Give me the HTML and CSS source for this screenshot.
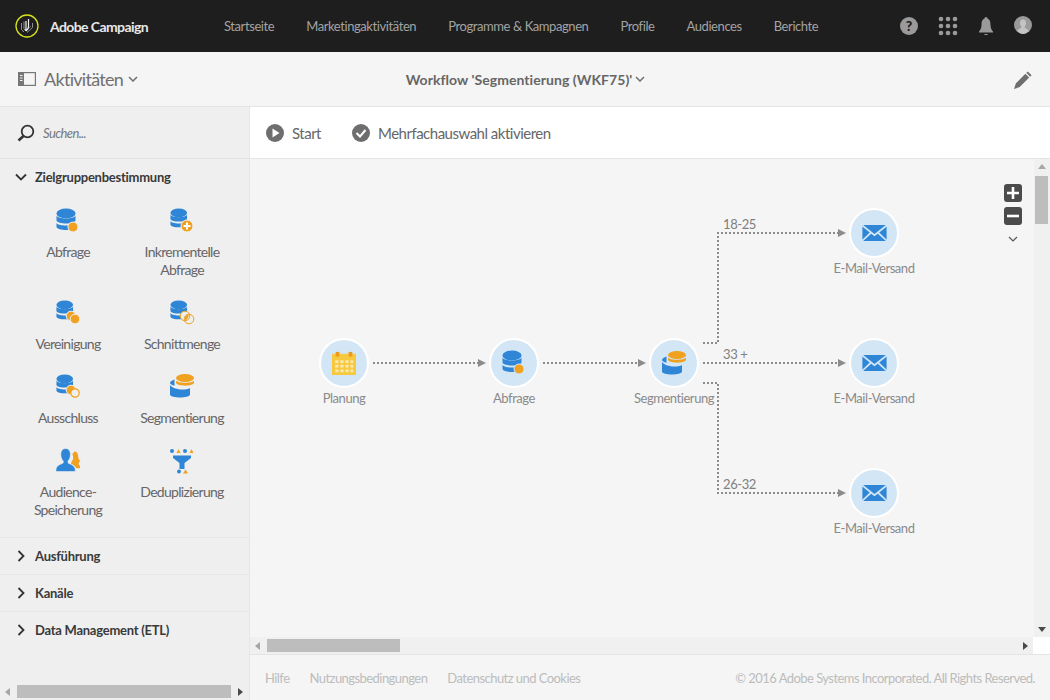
FILE: index.html
```html
<!DOCTYPE html>
<html lang="de">
<head>
  <meta charset="UTF-8">
  <meta name="viewport" content="width=device-width, initial-scale=1.0">
  <title>Adobe Campaign</title>
  <link rel="stylesheet" href="styles.css">
</head>
<body>
  <!-- shared icons -->
  <svg class="icon-defs" width="0" height="0" aria-hidden="true">
    <defs>
      <symbol id="db" viewBox="0 0 24 24">
        <ellipse cx="10" cy="5.500" rx="9.500" ry="5" fill="#2f86d6"/>
        <path d="M.5 7.500C1.500 11.500 18.500 11.500 19.500 7.500V12.500C18.500 16.500 1.500 16.500 .5 12.500Z" fill="#2f86d6"/>
        <path d="M.5 14.800C1.500 18.500 18.500 18.500 19.500 14.800V19C18.500 23 1.500 23 .5 19Z" fill="#2f86d6"/>
      </symbol>
      <symbol id="mail" viewBox="0 0 26 18">
        <path d="M1 0H25L13 9.500Z" fill="#2f86d6"/>
        <path d="M0 1.500L8 8 0 15.500ZM26 1.500L18 8 26 15.500ZM9.500 9.200L13 12 16.500 9.200 25 17H1Z" fill="#2f86d6"/>
      </symbol>
      <symbol id="segment" viewBox="0 0 24 24">
        <path d="M4.500 5.500C2 6.300 0 7.500 0 9C0 10 2 11 4.500 11.800Z" fill="#2f86d6"/>
        <path d="M0 11C2 14 8 15.500 12 15.500C16 15.500 20 15 20 13.500V20.500C20 24.500 0 24.500 0 20.500Z" fill="#2f86d6"/>
        <ellipse cx="15" cy="4" rx="9" ry="4" fill="#f0a11f"/>
        <path d="M6 6.500C7.500 9.500 22.500 9.500 24 6.500V9C22.500 12.500 7.500 12.500 6 9Z" fill="#f0a11f"/>
      </symbol>
    </defs>
  </svg>

  <header class="topbar">
    <div class="brand">
      <svg class="brand-logo" viewBox="0 0 24 24" width="24" height="24">
        <circle cx="12" cy="12" r="11" fill="none" stroke="#d6e21b" stroke-width="1.300"/>
        <path d="M6.500 9V15.500L9 18M9 7.500V15L11 17" fill="none" stroke="#8f8f8f" stroke-width="1"/>
        <path d="M17.500 9V13.500L12 18.500M15.500 12.500L11.500 16" fill="none" stroke="#8f8f8f" stroke-width="1"/>
        <path d="M11 7V15C11 16 10 16.500 10 16.500M13.500 5V12.500C13.500 15 12 16 11 17" fill="none" stroke="#f2f2f2" stroke-width="1.200"/>
      </svg>
      <span>Adobe Campaign</span>
    </div>
    <nav class="topnav">
      <a>Startseite</a>
      <a>Marketingaktivitäten</a>
      <a>Programme &amp; Kampagnen</a>
      <a>Profile</a>
      <a>Audiences</a>
      <a>Berichte</a>
    </nav>
    <div class="topicons">
      <span class="help-icon">?</span>
      <svg viewBox="0 0 20 20" width="20" height="20" fill="#9a9a9a">
        <circle cx="3" cy="3" r="2.300"/><circle cx="10" cy="3" r="2.300"/><circle cx="17" cy="3" r="2.300"/>
        <circle cx="3" cy="10" r="2.300"/><circle cx="10" cy="10" r="2.300"/><circle cx="17" cy="10" r="2.300"/>
        <circle cx="3" cy="17" r="2.300"/><circle cx="10" cy="17" r="2.300"/><circle cx="17" cy="17" r="2.300"/>
      </svg>
      <svg viewBox="0 0 16 20" width="16" height="20" fill="#9a9a9a">
        <path d="M8 1C9 1 9.500 1.800 9.500 2.500C12 3.300 12.500 6 12.500 9C12.500 12 13.500 14 15 15.500V16.500H1V15.500C2.500 14 3.500 12 3.500 9C3.500 6 4 3.300 6.500 2.500C6.500 1.800 7 1 8 1Z"/>
        <path d="M6 18H10C9.500 19.300 6.500 19.300 6 18Z"/>
      </svg>
      <svg class="avatar" viewBox="0 0 18 18" width="18" height="18">
        <circle cx="9" cy="9" r="9" fill="#9a9a9a"/>
        <path d="M9 3.500C11 3.500 12 5 12 7C12 9 11 10.500 10.500 11C10.500 12 13 12.500 14.800 14.500C13.500 16.500 11 18 9 18C7 18 4.500 16.500 3.200 14.500C5 12.500 7.500 12 7.500 11C7 10.500 6 9 6 7C6 5 7 3.500 9 3.500Z" fill="#c4c4c4"/>
      </svg>
    </div>
  </header>

  <div class="subbar">
    <div class="subbar-left">
      <svg viewBox="0 0 18 14" width="18" height="14">
        <rect x=".6" y=".6" width="16.800" height="12.800" fill="none" stroke="#777" stroke-width="1.200"/>
        <rect x=".6" y=".6" width="5.400" height="12.800" fill="#777"/>
        <path d="M2 3.500H4.500M2 6H4.500M2 8.500H4.500" stroke="#f5f5f5" stroke-width="1"/>
      </svg>
      <span class="subbar-title">Aktivitäten</span>
      <svg class="chev" viewBox="0 0 10 6" width="10" height="6"><path d="M1 1L5 5 9 1" fill="none" stroke="#707070" stroke-width="1.500"/></svg>
    </div>
    <div class="workflow-title">
      <span>Workflow 'Segmentierung (WKF75)'</span>
      <svg class="chev" viewBox="0 0 10 6" width="10" height="6"><path d="M1 1L5 5 9 1" fill="none" stroke="#707070" stroke-width="1.500"/></svg>
    </div>
    <div class="subbar-right">
      <svg viewBox="0 0 20 20" width="19" height="19" fill="#6e6e6e">
        <path d="M14.500 1.500L18.500 5.500 17 7 13 3ZM12 4L16 8 6 18 0 20 2 14Z"/>
      </svg>
    </div>
  </div>

  <div class="workspace">
    <aside class="sidebar">
      <div class="search-row">
        <svg viewBox="0 0 18 18" width="18" height="18">
          <circle cx="10.500" cy="7.500" r="5.800" fill="none" stroke="#333" stroke-width="1.800"/>
          <path d="M6.500 12L1.500 16.500" stroke="#333" stroke-width="2.600"/>
        </svg>
        <span>Suchen...</span>
      </div>

      <section class="group">
        <div class="group-head">
          <svg viewBox="0 0 12 8" width="12" height="8"><path d="M1 1.500L6 6.500 11 1.500" fill="none" stroke="#333" stroke-width="1.800"/></svg>
          <span>Zielgruppenbestimmung</span>
        </div>
        <div class="activity-grid">
          <div class="activity">
            <svg class="activity-icon" viewBox="0 0 24 26" width="24" height="26">
              <use href="#db" width="24" height="24"/>
              <circle cx="17" cy="19" r="5" fill="#f0a11f" stroke="#efefef" stroke-width="1"/>
            </svg>
            <span>Abfrage</span>
          </div>
          <div class="activity">
            <svg class="activity-icon" viewBox="0 0 24 26" width="24" height="26">
              <use href="#db" width="21" height="21"/>
              <circle cx="17" cy="18" r="6" fill="#f0a11f" stroke="#efefef" stroke-width="1"/>
              <path d="M17 14.500V21.500M13.500 18H20.500" stroke="#fff" stroke-width="2"/>
            </svg>
            <span>Inkrementelle Abfrage</span>
          </div>
          <div class="activity">
            <svg class="activity-icon" viewBox="0 0 24 26" width="24" height="26">
              <use href="#db" width="21" height="21"/>
              <circle cx="15" cy="16" r="4.800" fill="#f0a11f" stroke="#efefef" stroke-width="1"/>
              <circle cx="19" cy="19" r="4.800" fill="#f0a11f" stroke="#efefef" stroke-width="1"/>
            </svg>
            <span>Vereinigung</span>
          </div>
          <div class="activity">
            <svg class="activity-icon" viewBox="0 0 24 26" width="24" height="26">
              <use href="#db" width="21" height="21"/>
              <circle cx="15" cy="16" r="4.800" fill="#efefef" stroke="#f0a11f" stroke-width="1"/>
              <circle cx="19" cy="19" r="4.800" fill="none" stroke="#f0a11f" stroke-width="1"/>
              <path d="M15.200 20.500C17 20 18.500 18 18.800 14.600C15.500 15 14 17.500 15.200 20.500Z" fill="#f0a11f"/>
            </svg>
            <span>Schnittmenge</span>
          </div>
          <div class="activity">
            <svg class="activity-icon" viewBox="0 0 24 26" width="24" height="26">
              <use href="#db" width="21" height="21"/>
              <circle cx="15" cy="16" r="4.800" fill="#f0a11f" stroke="#efefef" stroke-width="1"/>
              <circle cx="19" cy="19" r="4.200" fill="#efefef" stroke="#f0a11f" stroke-width="1.200"/>
            </svg>
            <span>Ausschluss</span>
          </div>
          <div class="activity">
            <svg class="activity-icon" viewBox="0 0 24 26" width="24" height="26"><use href="#segment" width="24" height="24"/></svg>
            <span>Segmentierung</span>
          </div>
          <div class="activity">
            <svg class="activity-icon" viewBox="0 0 26 26" width="25" height="25">
              <path d="M19 3C21.500 3 23 5 23 7.500C23 10 24 12 25.500 13C24 14 23.500 15 23.500 16.500L25 18V20.500H21C20 17.500 17 16.500 15.500 15.500L16.500 13C18 12 18.500 9 17 6Z" fill="#f0a11f"/>
              <path d="M10 0C13.500 0 15 3 15 6C15 9 14 11.500 12.500 13V15C15 16.500 20 17.500 20 22V24H0V22C0 17.500 5 16.500 7.500 15V13C6 11.500 5 9 5 6C5 3 6.500 0 10 0Z" fill="#2f86d6" stroke="#efefef" stroke-width=".6"/>
            </svg>
            <span>Audience-Speicherung</span>
          </div>
          <div class="activity">
            <svg class="activity-icon" viewBox="0 0 24 26" width="24" height="26">
              <circle cx="2" cy="3" r="2" fill="#2f86d6"/>
              <path d="M6.500 5L8.500 1 10.500 5Z" fill="#f0a11f"/>
              <circle cx="15" cy="3" r="2" fill="#2f86d6"/>
              <path d="M19.500 5L21.500 1 23.500 5Z" fill="#f0a11f"/>
              <path d="M3 7.500H21V10L14.500 15V21H9.500V15L3 10Z" fill="#2f86d6"/>
              <circle cx="9" cy="23.500" r="2" fill="#2f86d6"/>
              <path d="M13 25.500L15.500 21.500 18 25.500Z" fill="#f0a11f"/>
            </svg>
            <span>Deduplizierung</span>
          </div>
        </div>
      </section>

      <div class="group-head closed">
        <svg viewBox="0 0 8 12" width="8" height="12"><path d="M1.500 1L6.500 6 1.500 11" fill="none" stroke="#333" stroke-width="1.800"/></svg>
        <span>Ausführung</span>
      </div>
      <div class="group-head closed">
        <svg viewBox="0 0 8 12" width="8" height="12"><path d="M1.500 1L6.500 6 1.500 11" fill="none" stroke="#333" stroke-width="1.800"/></svg>
        <span>Kanäle</span>
      </div>
      <div class="group-head closed last">
        <svg viewBox="0 0 8 12" width="8" height="12"><path d="M1.500 1L6.500 6 1.500 11" fill="none" stroke="#333" stroke-width="1.800"/></svg>
        <span>Data Management (ETL)</span>
      </div>

      <div class="sidebar-spacer"></div>
      <div class="hscroll sidebar-scroll">
        <span class="arrow arrow-left"></span>
        <span class="hscroll-thumb"></span>
        <span class="arrow arrow-right dark"></span>
      </div>
    </aside>

    <main class="main">
      <div class="toolbar">
        <div class="tool">
          <svg viewBox="0 0 18 18" width="18" height="18">
            <circle cx="9" cy="9" r="9" fill="#6e6e6e"/>
            <path d="M6.500 4.500L13.500 9 6.500 13.500Z" fill="#fff"/>
          </svg>
          <span>Start</span>
        </div>
        <div class="tool">
          <svg viewBox="0 0 18 18" width="18" height="18">
            <circle cx="9" cy="9" r="9" fill="#6e6e6e"/>
            <path d="M4.500 9L8 12.500 13.500 6" fill="none" stroke="#fff" stroke-width="2"/>
          </svg>
          <span>Mehrfachauswahl aktivieren</span>
        </div>
      </div>

      <div class="canvas-wrap">
        <div class="canvas-row">
          <div class="stage">
            <svg class="links" width="784" height="478">
              <g fill="none" stroke="#8c8c8c" stroke-width="2" stroke-dasharray="2 2">
                <path d="M123 204H229"/>
                <path d="M293 204H389"/>
                <path d="M453 184H468V74H589"/>
                <path d="M453 204H589"/>
                <path d="M453 224H468V334H589"/>
              </g>
              <g fill="#8c8c8c">
                <path d="M228 200L236 204 228 208Z"/>
                <path d="M388 200L396 204 388 208Z"/>
                <path d="M588 70L596 74 588 78Z"/>
                <path d="M588 200L596 204 588 208Z"/>
                <path d="M588 330L596 334 588 338Z"/>
              </g>
            </svg>

            <span class="link-label label-a">18-25</span>
            <span class="link-label label-b">33 +</span>
            <span class="link-label label-c">26-32</span>

            <div class="node node-plan">
              <div class="node-circle">
                <svg viewBox="0 0 26 26" width="24" height="24">
                  <rect x="0" y="3" width="26" height="23" fill="#f7c93e"/>
                  <rect x="4" y="1" width="4" height="5" fill="#ee9a1c"/>
                  <rect x="18" y="1" width="4" height="5" fill="#ee9a1c"/>
                  <path d="M3.500 10H7V13H3.500ZM9 10H12.500V13H9ZM14.500 10H18V13H14.500ZM20 10H23V13H20ZM3.500 15H7V18H3.500ZM9 15H12.500V18H9ZM14.500 15H18V18H14.500ZM20 15H23V18H20ZM3.500 20H7V23H3.500ZM9 20H12.500V23H9ZM14.500 20H18V23H14.500ZM20 20H23V23H20Z" fill="#fbe9ae"/>
                </svg>
              </div>
              <span>Planung</span>
            </div>
            <div class="node node-query">
              <div class="node-circle">
                <svg viewBox="0 0 24 26" width="24" height="26">
                  <use href="#db" width="24" height="24"/>
                  <circle cx="17" cy="19" r="5" fill="#f0a11f" stroke="#d3e6f6" stroke-width="1"/>
                </svg>
              </div>
              <span>Abfrage</span>
            </div>
            <div class="node node-seg">
              <div class="node-circle">
                <svg viewBox="0 0 24 24" width="24" height="24"><use href="#segment"/></svg>
              </div>
              <span>Segmentierung</span>
            </div>
            <div class="node node-mail-a">
              <div class="node-circle">
                <svg viewBox="0 0 26 18" width="25" height="17"><use href="#mail"/></svg>
              </div>
              <span>E-Mail-Versand</span>
            </div>
            <div class="node node-mail-b">
              <div class="node-circle">
                <svg viewBox="0 0 26 18" width="25" height="17"><use href="#mail"/></svg>
              </div>
              <span>E-Mail-Versand</span>
            </div>
            <div class="node node-mail-c">
              <div class="node-circle">
                <svg viewBox="0 0 26 18" width="25" height="17"><use href="#mail"/></svg>
              </div>
              <span>E-Mail-Versand</span>
            </div>

            <div class="zoom-tools">
              <span class="zoom-btn">
                <svg viewBox="0 0 18 18" width="18" height="18"><path d="M9 3V15M3 9H15" stroke="#fff" stroke-width="2.600"/></svg>
              </span>
              <span class="zoom-btn">
                <svg viewBox="0 0 18 18" width="18" height="18"><path d="M3 9H15" stroke="#fff" stroke-width="2.600"/></svg>
              </span>
              <svg class="zoom-more" viewBox="0 0 10 6" width="10" height="6"><path d="M1 1L5 5 9 1" fill="none" stroke="#555" stroke-width="1.200"/></svg>
            </div>
          </div>
          <div class="vscroll">
            <span class="arrow arrow-up"></span>
            <span class="vscroll-thumb"></span>
            <span class="vscroll-fill"></span>
            <span class="arrow arrow-down"></span>
          </div>
        </div>
        <div class="hscroll-row">
          <div class="hscroll stage-scroll">
            <span class="arrow arrow-left"></span>
            <span class="hscroll-thumb"></span>
            <span class="arrow arrow-right dark"></span>
          </div>
          <div class="scroll-corner"></div>
        </div>
      </div>

      <footer class="footer">
        <div class="footer-links">
          <a>Hilfe</a>
          <a>Nutzungsbedingungen</a>
          <a>Datenschutz und Cookies</a>
        </div>
        <div>© 2016 Adobe Systems Incorporated. All Rights Reserved.</div>
      </footer>
    </main>
  </div>
</body>
</html>
```

FILE: styles.css
```css
* {
  box-sizing: border-box;
}

html, body {
  height: 100%;
}

body {
  margin: 0;
  width: 1050px;
  height: 700px;
  overflow: hidden;
  display: flex;
  flex-direction: column;
  font-family: Lato, "Open Sans", sans-serif;
  color: #707070;
  background-color: #f5f5f5;
}

.icon-defs {
  position: absolute;
}

/* top bar */
.topbar {
  height: 52px;
  flex: none;
  display: flex;
  align-items: center;
  background-color: #1e1e1e;
}

.brand {
  width: 224px;
  padding-left: 15px;
  display: flex;
  align-items: center;
  gap: 11px;
  font-size: 14px;
  font-weight: 700;
  letter-spacing: -0.6px;
  color: #e8e8e8;
}

.topnav {
  display: flex;
  gap: 32px;
  font-size: 13px;
  letter-spacing: -0.42px;
  color: #a3a3a3;
}

.topicons {
  margin-left: auto;
  width: 150px;
  padding: 0 18px 0 0;
  display: flex;
  align-items: center;
  justify-content: space-between;
}

.avatar {
  margin-top: -2px;
}

.help-icon {
  width: 18px;
  height: 18px;
  border-radius: 50%;
  background-color: #9a9a9a;
  color: #1e1e1e;
  font-size: 14px;
  font-weight: 900;
  line-height: 18px;
  text-align: center;
}

/* sub bar */
.subbar {
  height: 55px;
  flex: none;
  display: grid;
  grid-template-columns: 1fr auto 1fr;
  align-items: center;
  padding: 0 17px 0 18px;
  background-color: #f5f5f5;
  border-bottom: 1px solid #e4e4e4;
}

.subbar-left {
  display: flex;
  align-items: center;
  gap: 8px;
}

.subbar-title {
  font-size: 18px;
  letter-spacing: -0.7px;
}

.subbar-left .chev {
  margin-left: -3px;
}

.workflow-title {
  display: flex;
  align-items: center;
  gap: 3px;
  font-size: 14px;
  font-weight: 700;
  letter-spacing: 0.05px;
  color: #666;
}

.subbar-right {
  display: flex;
  justify-content: flex-end;
}

/* layout */
.workspace {
  flex: 1;
  min-height: 0;
  display: flex;
}

.sidebar {
  width: 250px;
  flex: none;
  display: flex;
  flex-direction: column;
  background-color: #efefef;
  border-right: 1px solid #e6e6e6;
}

.search-row {
  height: 52px;
  flex: none;
  display: flex;
  align-items: center;
  gap: 8px;
  padding-left: 17px;
  border-bottom: 1px solid #e4e4e4;
  font-size: 13px;
  font-style: italic;
  letter-spacing: -0.6px;
  color: #777;
}

.group {
  border-bottom: 1px solid #e6e6e6;
  padding-bottom: 18px;
}

.group-head {
  height: 36px;
  display: flex;
  align-items: center;
  gap: 8px;
  padding-left: 15px;
  font-size: 13px;
  font-weight: 700;
  letter-spacing: -0.25px;
  color: #3a3a3a;
}

.group-head.closed {
  height: 37px;
  gap: 10px;
  padding-left: 17px;
  border-bottom: 1px solid #e6e6e6;
}

.group-head.closed.last {
  border-bottom-color: transparent;
}

.activity-grid {
  display: grid;
  grid-template-columns: 114px 114px;
  row-gap: 17px;
  padding: 9px 0 0 11px;
}

.activity {
  display: flex;
  flex-direction: column;
  align-items: center;
  text-align: center;
  font-size: 14px;
  line-height: 18px;
  letter-spacing: -0.7px;
  color: #666;
}

.activity span {
  display: block;
  width: 100px;
}

.activity-icon {
  height: 26px;
  margin-top: 4px;
  margin-bottom: 9px;
  overflow: visible;
}

.sidebar-spacer {
  flex: 1;
}

/* fake scrollbars */
.hscroll {
  display: flex;
  align-items: center;
  height: 16px;
}

.hscroll-thumb {
  flex: 1;
  height: 13px;
  background-color: #bdbdbd;
}

.arrow {
  flex: none;
  width: 0;
  height: 0;
  border-style: solid;
  border-color: transparent;
}

.arrow-left {
  margin: 0 5px 0 5px;
  border-width: 4px 5px 4px 0;
  border-right-color: #a6a6a6;
}

.arrow-right {
  margin: 0 5px 0 6px;
  border-width: 4px 0 4px 5px;
  border-left-color: #a6a6a6;
}

.arrow-right.dark {
  border-left-color: #4a4a4a;
}

.sidebar-scroll {
  height: 17px;
  flex: none;
}

.sidebar-scroll .arrow-left {
  margin-right: 7px;
}

.sidebar-scroll .arrow-right {
  margin-left: 7px;
  margin-right: 6px;
}

.main {
  flex: 1;
  min-width: 0;
  display: flex;
  flex-direction: column;
}

.toolbar {
  height: 52px;
  flex: none;
  display: flex;
  align-items: center;
  gap: 31px;
  padding-left: 16px;
  background-color: #fff;
  border-bottom: 1px solid #e4e4e4;
  font-size: 15px;
  letter-spacing: -0.5px;
  color: #666;
}

.tool {
  display: flex;
  align-items: center;
  gap: 8px;
}

.canvas-wrap {
  flex: 1;
  min-height: 0;
  display: flex;
  flex-direction: column;
  background-color: #f5f5f5;
}

.canvas-row {
  flex: 1;
  min-height: 0;
  display: flex;
}

.stage {
  position: relative;
  flex: 1;
}

.links {
  position: absolute;
  left: 0;
  top: 0;
}

.link-label {
  position: absolute;
  left: 473px;
  font-size: 13px;
  line-height: 14px;
  letter-spacing: -0.4px;
  color: #808080;
}

.label-a { top: 58px; }
.label-b { top: 188px; }
.label-c { top: 318px; }

.node {
  position: absolute;
  width: 120px;
  display: flex;
  flex-direction: column;
  align-items: center;
  gap: 2px;
  font-size: 13px;
  line-height: 16px;
  letter-spacing: -0.45px;
  color: #8a8a8a;
}

.node-circle {
  width: 50px;
  height: 50px;
  display: flex;
  align-items: center;
  justify-content: center;
  border-radius: 50%;
  background-color: #d3e6f6;
  border: 2px solid #fff;
}

.node-plan { left: 34px; top: 179px; }
.node-query { left: 204px; top: 179px; }
.node-seg { left: 364px; top: 179px; }
.node-mail-a { left: 564px; top: 49px; }
.node-mail-b { left: 564px; top: 179px; }
.node-mail-c { left: 564px; top: 309px; }

.zoom-tools {
  position: absolute;
  left: 754px;
  top: 25px;
  display: flex;
  flex-direction: column;
  align-items: center;
  gap: 5px;
}

.zoom-btn {
  width: 18px;
  height: 18px;
  border-radius: 3px;
  background-color: #4b4b4b;
}

.zoom-btn svg {
  display: block;
}

.zoom-more {
  margin-top: 6px;
}

.vscroll {
  width: 16px;
  flex: none;
  display: flex;
  flex-direction: column;
  align-items: center;
  padding: 5px 1px 0 0;
  background-color: #f0f0f0;
}

.vscroll-thumb {
  width: 13px;
  height: 48px;
  margin-top: 7px;
  background-color: #bdbdbd;
}

.vscroll-fill {
  flex: 1;
}

.arrow-up {
  border-width: 0 4px 5px 4px;
  border-bottom-color: #a6a6a6;
}

.arrow-down {
  margin-bottom: 5px;
  border-width: 5px 4px 0 4px;
  border-top-color: #4a4a4a;
}

.hscroll-row {
  height: 17px;
  flex: none;
  display: flex;
}

.stage-scroll {
  flex: 1;
  height: 17px;
  background-color: #f0f0f0;
}

.stage-scroll .hscroll-thumb {
  flex: none;
  width: 133px;
  margin-left: 2px;
  margin-right: auto;
}

.scroll-corner {
  width: 17px;
  background-color: #fff;
}

.footer {
  height: 46px;
  flex: none;
  display: flex;
  align-items: center;
  justify-content: space-between;
  padding: 0 15px;
  border-top: 1px solid #e4e4e4;
  font-size: 13px;
  letter-spacing: -0.55px;
  color: #bcbcbc;
}

.footer-links {
  display: flex;
  gap: 20px;
}
```
